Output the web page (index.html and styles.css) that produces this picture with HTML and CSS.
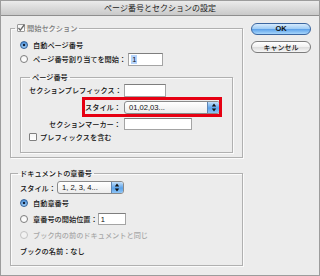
FILE: index.html
```html
<!DOCTYPE html>
<html lang="ja">
<head>
<meta charset="utf-8">
<link rel="stylesheet" href="styles.css">
</head>
<body>
<div class="window">
  <div class="titlebar">ページ番号とセクションの設定</div>
  <div class="main">
    <div class="left">
      <fieldset class="group g1">
        <legend class="legend l1"><span class="check checked dimmed"><svg viewBox="0 0 8 8" width="8" height="8"><path d="M1.5 4 L3.3 6.2 L7.5 0.5" fill="none" stroke="#6a6a6a" stroke-width="1.3"/></svg></span><span class="dimtext">開始セクション</span></legend>
        <div class="row"><span class="radio on"></span>自動ページ番号</div>
        <div class="row"><span class="radio"></span>ページ番号割り当てを開始：<span class="input w35"><span class="sel">1</span></span></div>
        <fieldset class="group inner">
          <legend class="legend l3">ページ番号</legend>
          <div class="form">
            <div class="frow h14"><span class="lbl">セクションプレフィックス：</span><span class="input w42"></span></div>
            <div class="frow h20 mark"><span class="lbl">スタイル：</span><span class="select w96"><span class="val">01,02,03...</span><span class="arrows"><svg viewBox="0 0 6 9" width="6" height="9"><path d="M3 0.5 L5.2 3.4 L0.8 3.4 Z M3 8.5 L5.2 5.6 L0.8 5.6 Z" fill="#111"/></svg></span></span><span class="highlight"></span></div>
            <div class="frow h14"><span class="lbl">セクションマーカー：</span><span class="input w68 h12"></span></div>
          </div>
          <div class="row crow"><span class="check"></span>プレフィックスを含む</div>
        </fieldset>
      </fieldset>
      <fieldset class="group g2">
        <legend class="legend l2">ドキュメントの章番号</legend>
        <div class="row r15">スタイル：<span class="select w67"><span class="val">1, 2, 3, 4...</span><span class="arrows"><svg viewBox="0 0 6 9" width="6" height="9"><path d="M3 0.5 L5.2 3.4 L0.8 3.4 Z M3 8.5 L5.2 5.6 L0.8 5.6 Z" fill="#111"/></svg></span></span></div>
        <div class="row r16"><span class="radio on"></span>自動章番号</div>
        <div class="row r16"><span class="radio"></span>章番号の開始位置：<span class="input w28 h12"><span>1</span></span></div>
        <div class="row r16 disabled"><span class="radio off"></span>ブック内の前のドキュメントと同じ</div>
        <div class="row r16">ブックの名前：なし</div>
      </fieldset>
    </div>
    <div class="buttons">
      <div class="btn default">OK</div>
      <div class="btn">キャンセル</div>
    </div>
  </div>
</div>
</body>
</html>
```
FILE: styles.css
```css
* { box-sizing: border-box; }
html, body { margin: 0; padding: 0; }
body {
  width: 320px;
  height: 276px;
  background: #ffffff;
  font-family: "Noto Sans CJK JP", "Noto Sans", sans-serif;
  font-size: 7.2px;
  font-weight: 500;
  color: #111111;
}
.window {
  width: 320px;
  height: 276px;
  border: 1px solid #9c9c9c;
  background: #ececec;
}
.titlebar {
  height: 15px;
  border-bottom: 1px solid #8e8e8e;
  background: linear-gradient(#ebebeb, #c9c9c9);
  text-align: center;
  font-size: 8px;
  font-weight: normal;
  line-height: 14px;
  color: #222222;
}
.main {
  display: flex;
  padding: 7px 0 0 9px;
}
.left {
  display: flex;
  flex-direction: column;
}
fieldset.group {
  margin: 0;
  min-width: 0;
  border: 1px solid #b0b0b0;
  box-shadow: 1px 1px 0 #fbfbfb, inset 1px 1px 0 #fbfbfb;
}
.g1 {
  width: 233px;
  padding: 5px 9px 4px 9px;
}
.g2 {
  width: 233px;
  margin-top: 10px !important;
  padding: 2px 9px 6px 9px;
}
.inner {
  width: 213px;
  margin-top: 6px !important;
  padding: 1px 8px 9px 8px;
}
.legend {
  display: flex;
  align-items: center;
  height: 10px;
  padding: 0 2px;
  line-height: 10px;
}
.l1 { margin-left: -5px; }
.l2 { margin-left: -2px; }
.l3 { margin-left: 1px; }
.dimtext { color: #7a7a7a; margin-left: 2px; }
.row {
  display: flex;
  align-items: center;
  height: 14px;
  white-space: nowrap;
}
.r15 { height: 15px; }
.r16 { height: 16px; }
.crow { height: 12px; }
.disabled { color: #a8a8a8; }
.radio {
  width: 8px;
  height: 8px;
  border-radius: 50%;
  border: 1px solid #7d7d7d;
  background: linear-gradient(#f4f4f4, #ffffff);
  margin-right: 5px;
  flex: none;
}
.radio.on {
  border-color: #2f5f98;
  background: radial-gradient(circle, #13223a 0 1.3px, transparent 1.6px), linear-gradient(#4b8fd8, #9fcdf6);
}
.radio.off { border-color: #c2c2c2; background: #f2f2f2; }
.check {
  width: 8px;
  height: 8px;
  border: 1px solid #808080;
  border-radius: 1px;
  background: linear-gradient(#f6f6f6, #ffffff);
  margin-right: 3px;
  flex: none;
  display: flex;
  align-items: center;
  justify-content: center;
  overflow: visible;
}
.check svg { margin-top: -1px; overflow: visible; }
.check.dimmed { border-color: #9a9a9a; margin-right: 0; }
.input {
  display: inline-flex;
  align-items: center;
  height: 13px;
  background: #ffffff;
  border: 1px solid #a4a4a4;
  border-top-color: #7e7e7e;
  padding-left: 2px;
  font-family: "Liberation Sans", sans-serif;
  font-size: 7.5px;
  font-weight: normal;
  flex: none;
}
.input.h12 { height: 12px; }
.w28 { width: 28px; }
.w35 { width: 35px; margin-left: 2px; }
.w42 { width: 42px; }
.w68 { width: 68px; }
.sel { background: #b4d3fb; padding: 0 1px; }
.form {
  display: flex;
  flex-direction: column;
}
.frow {
  display: grid;
  grid-template-columns: 92px auto;
  column-gap: 3px;
  align-items: center;
  position: relative;
}
.h14 { height: 14px; }
.h20 { height: 20px; }
.lbl { text-align: right; white-space: nowrap; }
.select {
  display: flex;
  align-items: center;
  height: 13px;
  border: 1px solid #8a8a8a;
  border-radius: 3px;
  background: linear-gradient(#ffffff, #ececec);
  font-family: "Liberation Sans", sans-serif;
  font-size: 7.6px;
  font-weight: normal;
  color: #111111;
  overflow: hidden;
  flex: none;
}
.select .val { padding-left: 4px; flex: 1; }
.w96 { width: 96px; }
.w67 { width: 67px; margin-left: 1px; }
.arrows {
  width: 12px;
  height: 100%;
  background: linear-gradient(#c4e0fa, #5aa2ea 55%, #8ec4f5);
  border-left: 1px solid #5f86b5;
  display: flex;
  align-items: center;
  justify-content: center;
}
.highlight {
  position: absolute;
  left: 53px;
  top: 0;
  width: 140px;
  height: 20px;
  border: 3px solid #e60012;
}
.buttons {
  margin-left: 8px;
  display: flex;
  flex-direction: column;
  gap: 6px;
}
.btn {
  width: 60px;
  height: 12px;
  border: 1px solid #7c7c7c;
  border-radius: 7px;
  background: linear-gradient(#ffffff, #f0f0f0 50%, #dcdcdc 51%, #f6f6f6);
  text-align: center;
  font-size: 7px;
  line-height: 10px;
  color: #111111;
}
.btn.default {
  border-color: #3b66a0;
  background: linear-gradient(#d6ebfd, #9ccaf4 50%, #5aa0ea 51%, #a8d6fb);
  font-family: "Liberation Sans", sans-serif;
  font-weight: bold;
  font-size: 7.5px;
}
```
